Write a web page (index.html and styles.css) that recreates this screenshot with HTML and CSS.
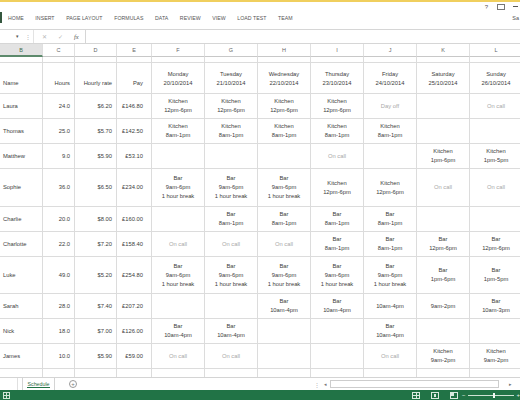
FILE: index.html
```html
<!DOCTYPE html>
<html>
<head>
<meta charset="utf-8">
<link rel="stylesheet" href="styles.css">
</head>
<body>
<div class="app">
  <div class="titlebar">
    <div class="winctl">
      <span class="help">?</span>
      <span class="restore"><span class="arrow"></span></span>
      <span class="min"></span>
    </div>
  </div>
  <div class="ribbon">
    <span class="file"></span>
    <nav class="tabs">
      <span>HOME</span><span>INSERT</span><span>PAGE LAYOUT</span><span>FORMULAS</span><span>DATA</span><span>REVIEW</span><span>VIEW</span><span>LOAD TEST</span><span>TEAM</span>
    </nav>
    <span class="user">Sa</span>
  </div>
  <div class="fbar">
    <div class="namebox"><span class="dd">▾</span></div>
    <span class="vdots">⋮</span>
    <div class="fbtns"><span class="x">✕</span><span class="ok">✓</span><span class="fx">fx</span></div>
    <div class="finput"></div>
  </div>
  <div class="sheet">
    <div class="ch sel">B</div><div class="ch">C</div><div class="ch">D</div><div class="ch">E</div><div class="ch">F</div><div class="ch">G</div><div class="ch">H</div><div class="ch">I</div><div class="ch">J</div><div class="ch">K</div><div class="ch">L</div>

    <div class="c"></div><div class="c"></div><div class="c"></div><div class="c"></div><div class="c"></div><div class="c"></div><div class="c"></div><div class="c"></div><div class="c"></div><div class="c"></div><div class="c"></div>

    <div class="c hd l">Name</div><div class="c hd r">Hours</div><div class="c hd r">Hourly rate</div><div class="c hd r pay">Pay</div>
    <div class="c hd">Monday<br>20/10/2014</div><div class="c hd">Tuesday<br>21/10/2014</div><div class="c hd">Wednesday<br>22/10/2014</div><div class="c hd">Thursday<br>23/10/2014</div><div class="c hd">Friday<br>24/10/2014</div><div class="c hd">Saturday<br>25/10/2014</div><div class="c hd">Sunday<br>26/10/2014</div>

    <div class="c l">Laura</div><div class="c r">24.0</div><div class="c r">$6.20</div><div class="c r pay">£146.80</div>
    <div class="c">Kitchen<br>12pm-6pm</div><div class="c">Kitchen<br>12pm-6pm</div><div class="c">Kitchen<br>12pm-6pm</div><div class="c">Kitchen<br>12pm-6pm</div><div class="c off">Day off</div><div class="c"></div><div class="c off">On call</div>

    <div class="c l">Thomas</div><div class="c r">25.0</div><div class="c r">$5.70</div><div class="c r pay">£142.50</div>
    <div class="c">Kitchen<br>8am-1pm</div><div class="c">Kitchen<br>8am-1pm</div><div class="c">Kitchen<br>8am-1pm</div><div class="c">Kitchen<br>8am-1pm</div><div class="c">Kitchen<br>8am-1pm</div><div class="c"></div><div class="c"></div>

    <div class="c l">Matthew</div><div class="c r">9.0</div><div class="c r">$5.90</div><div class="c r pay">£53.10</div>
    <div class="c"></div><div class="c"></div><div class="c"></div><div class="c off">On call</div><div class="c"></div><div class="c">Kitchen<br>1pm-6pm</div><div class="c">Kitchen<br>1pm-5pm</div>

    <div class="c l">Sophie</div><div class="c r">36.0</div><div class="c r">$6.50</div><div class="c r pay">£234.00</div>
    <div class="c">Bar<br>9am-6pm<br>1 hour break</div><div class="c">Bar<br>9am-6pm<br>1 hour break</div><div class="c">Bar<br>9am-6pm<br>1 hour break</div><div class="c">Kitchen<br>12pm-6pm</div><div class="c">Kitchen<br>12pm-6pm</div><div class="c off">On call</div><div class="c off">On call</div>

    <div class="c l">Charlie</div><div class="c r">20.0</div><div class="c r">$8.00</div><div class="c r pay">£160.00</div>
    <div class="c"></div><div class="c">Bar<br>8am-1pm</div><div class="c">Bar<br>8am-1pm</div><div class="c">Bar<br>8am-1pm</div><div class="c">Bar<br>8am-1pm</div><div class="c"></div><div class="c"></div>

    <div class="c l">Charlotte</div><div class="c r">22.0</div><div class="c r">$7.20</div><div class="c r pay">£158.40</div>
    <div class="c off">On call</div><div class="c off">On call</div><div class="c off">On call</div><div class="c">Bar<br>8am-1pm</div><div class="c">Bar<br>8am-1pm</div><div class="c">Bar<br>12pm-6pm</div><div class="c">Bar<br>12pm-6pm</div>

    <div class="c l">Luke</div><div class="c r">49.0</div><div class="c r">$5.20</div><div class="c r pay">£254.80</div>
    <div class="c">Bar<br>9am-6pm<br>1 hour break</div><div class="c">Bar<br>9am-6pm<br>1 hour break</div><div class="c">Bar<br>9am-6pm<br>1 hour break</div><div class="c">Bar<br>9am-6pm<br>1 hour break</div><div class="c">Bar<br>9am-6pm<br>1 hour break</div><div class="c">Bar<br>1pm-6pm</div><div class="c">Bar<br>1pm-5pm</div>

    <div class="c l">Sarah</div><div class="c r">28.0</div><div class="c r">$7.40</div><div class="c r pay">£207.20</div>
    <div class="c"></div><div class="c"></div><div class="c">Bar<br>10am-4pm</div><div class="c">Bar<br>10am-4pm</div><div class="c">10am-4pm</div><div class="c">9am-2pm</div><div class="c">Bar<br>10am-3pm</div>

    <div class="c l">Nick</div><div class="c r">18.0</div><div class="c r">$7.00</div><div class="c r pay">£126.00</div>
    <div class="c">Bar<br>10am-4pm</div><div class="c">Bar<br>10am-4pm</div><div class="c"></div><div class="c"></div><div class="c">Bar<br>10am-4pm</div><div class="c"></div><div class="c"></div>

    <div class="c l">James</div><div class="c r">10.0</div><div class="c r">$5.90</div><div class="c r pay">£59.00</div>
    <div class="c off">On call</div><div class="c off">On call</div><div class="c"></div><div class="c"></div><div class="c off">On call</div><div class="c">Kitchen<br>9am-2pm</div><div class="c">Kitchen<br>9am-2pm</div>

    <div class="c last"></div><div class="c last"></div><div class="c last"></div><div class="c last"></div><div class="c last"></div><div class="c last"></div><div class="c last"></div><div class="c last"></div><div class="c last"></div><div class="c last"></div><div class="c last"></div>
  </div>
  <div class="sheetbar">
    <div class="nav"></div>
    <div class="stab">Schedule</div>
    <div class="add">+</div>
    <div class="hs">
      <span class="hdots">⋮</span>
      <div class="track"><span class="larr">◂</span><div class="thumb"></div></div>
      <span class="rarr">▸</span>
    </div>
  </div>
  <div class="status">
    <span class="sicon"></span>
    <div class="views">
      <span class="v v1"></span><span class="v v2"></span><span class="v v3"></span>
      <div class="zoom"><span class="zm">−</span><div class="zline"><span class="zthumb"></span></div><span class="zp">+</span></div>
    </div>
  </div>
</div>
</body>
</html>
```

FILE: styles.css
```css
html, body {
  margin: 0;
  padding: 0;
  background: #ffffff;
}
body {
  width: 520px;
  height: 400px;
  overflow: hidden;
  font-family: "Liberation Sans", Arial, sans-serif;
  color: #404040;
}
.app {
  width: 520px;
  height: 400px;
  display: flex;
  flex-direction: column;
  overflow: hidden;
}

/* title bar */
.titlebar {
  height: 10px;
  border-top: 2px solid #f0cf5e;
  display: flex;
  justify-content: flex-end;
}
.winctl {
  display: flex;
  align-items: center;
  height: 9px;
}
.help {
  font-size: 6px;
  color: #555;
  line-height: 6px;
  margin-right: 9px;
}
.restore {
  width: 6px;
  height: 4px;
  border: 1px solid #777;
  margin-right: 8px;
  position: relative;
}
.min {
  width: 5px;
  height: 1px;
  background: #555;
  margin-right: 2px;
}

/* ribbon tabs */
.ribbon {
  height: 15px;
  display: flex;
  align-items: flex-start;
  position: relative;
}
.file {
  width: 2px;
  height: 11px;
  background: #35573f;
  margin-top: 0;
}
.tabs {
  display: flex;
  gap: 11.6px;
  padding-left: 6px;
  padding-top: 3px;
  font-size: 5.2px;
  line-height: 6px;
  color: #555;
  letter-spacing: 0.05px;
}
.user {
  margin-left: auto;
  margin-right: 1px;
  padding-top: 3px;
  font-size: 5.5px;
  line-height: 6px;
  color: #555;
  white-space: nowrap;
}

/* formula bar */
.fbar {
  margin-top: 2px;
  height: 13px;
  border-top: 1px solid #d6d6d6;
  border-bottom: 1px solid #d6d6d6;
  display: flex;
  align-items: center;
  box-sizing: content-box;
}
.namebox {
  width: 22px;
  height: 100%;
  display: flex;
  align-items: center;
  justify-content: flex-end;
}
.dd {
  font-size: 5px;
  color: #555;
  line-height: 5px;
  margin-right: 3px;
}
.vdots {
  font-size: 6px;
  color: #b0b0b0;
  line-height: 6px;
  margin-left: 3px;
  width: 8px;
}
.fbtns {
  display: flex;
  align-items: center;
  height: 100%;
  width: 52px;
  border-left: 1px solid #e3e3e3;
  box-sizing: border-box;
  padding-left: 8px;
  gap: 11px;
  font-size: 5.5px;
  line-height: 6px;
}
.fbtns .x, .fbtns .ok {
  color: #b8b8b8;
}
.fbtns .fx {
  color: #555;
  font-style: italic;
  font-family: "Liberation Serif", serif;
  font-size: 6.5px;
}
.finput {
  flex: 1;
  height: 100%;
  border-left: 1px solid #d6d6d6;
}

/* sheet grid */
.sheet {
  display: grid;
  grid-template-columns: 43px 32px 42px 35px repeat(7, 53px);
  grid-template-rows: 13px 6px 31px 25px 25px 25px 38px 25px 25px 37px 25px 25px 25px 8px;
  width: 523px;
}
.ch {
  box-sizing: border-box;
  border-right: 1px solid #e0e0e0;
  border-bottom: 1px solid #c8c8c8;
  display: flex;
  align-items: center;
  justify-content: center;
  font-size: 5.5px;
  color: #666;
}
.ch.sel {
  background: #e3e3e3;
  border-bottom: 2px solid #5d8a6c;
  color: #3f6d50;
}
.c {
  box-sizing: border-box;
  border-right: 1px solid #dcdcdc;
  border-bottom: 1px solid #dcdcdc;
  display: flex;
  align-items: center;
  justify-content: center;
  text-align: center;
  font-size: 5.8px;
  line-height: 9px;
  color: #404040;
  white-space: nowrap;
  overflow: hidden;
}
.c.l {
  justify-content: flex-start;
  text-align: left;
  padding-left: 3px;
}
.c.r {
  justify-content: flex-end;
  text-align: right;
  padding-right: 4px;
}
.c.pay {
  padding-right: 8px;
}
.c.hd {
  align-items: flex-end;
  padding-bottom: 5px;
}
.c.off {
  color: #a8a8a8;
}
.c.last {
  border-bottom: none;
}

/* sheet tabs bar */
.sheetbar {
  height: 12px;
  border-top: 1px solid #d4d4d4;
  display: flex;
  align-items: stretch;
  background: #ffffff;
}
.nav {
  width: 17px;
  border-right: 1px solid #e0e0e0;
}
.stab {
  margin-left: 4px;
  width: 33px;
  box-sizing: border-box;
  border-left: 1px solid #d4d4d4;
  border-right: 1px solid #d4d4d4;
  font-size: 5.3px;
  color: #2f6b45;
  display: flex;
  align-items: center;
  justify-content: center;
  position: relative;
}
.stab::after {
  content: "";
  position: absolute;
  left: 4px;
  right: 4px;
  bottom: 2px;
  height: 1px;
  background: #217346;
}
.add {
  margin-left: 14px;
  align-self: center;
  width: 6px;
  height: 6px;
  border: 1px solid #9a9a9a;
  border-radius: 50%;
  font-size: 6px;
  line-height: 6px;
  text-align: center;
  color: #777;
}
.hs {
  margin-left: auto;
  width: 206px;
  display: flex;
  align-items: center;
}
.hdots {
  font-size: 6px;
  color: #b0b0b0;
  width: 10px;
}
.track {
  width: 175px;
  height: 7px;
  display: flex;
  align-items: center;
}
.larr {
  font-size: 5px;
  color: #777;
  width: 6px;
}
.thumb {
  flex: 1;
  height: 6px;
  border: 1px solid #cdcdcd;
  background: #fff;
}
.rarr {
  font-size: 5px;
  color: #777;
  margin-left: 10px;
}

/* status bar */
.status {
  height: 10px;
  background: #217346;
  display: flex;
  align-items: center;
}
.sicon {
  width: 5px;
  height: 5px;
  margin-left: 3px;
  border: 1px solid #cfe6d6;
  background: linear-gradient(#cfe6d6, #cfe6d6) center / 1px 100% no-repeat, linear-gradient(#cfe6d6, #cfe6d6) center / 100% 1px no-repeat;
}
.views {
  margin-left: auto;
  display: flex;
  align-items: center;
  height: 100%;
}
.v {
  width: 6px;
  height: 5px;
  border: 1px solid #d9eade;
  margin-right: 11px;
}
.v1 {
  background: linear-gradient(#d9eade, #d9eade) center / 1px 100% no-repeat, linear-gradient(#d9eade, #d9eade) center / 100% 1px no-repeat;
}
.v2 {
  background: linear-gradient(#d9eade, #d9eade) center / 2px 3px no-repeat;
}
.v3 {
  background: linear-gradient(#d9eade, #d9eade) left top / 3px 3px no-repeat;
  margin-right: 4px;
}
.zoom {
  display: flex;
  align-items: center;
  width: 58px;
}
.zm, .zp {
  font-size: 6px;
  color: #e6f1e9;
  line-height: 6px;
}
.zline {
  flex: 1;
  height: 1px;
  background: #cfe3d5;
  margin: 0 2px;
  position: relative;
}
.zthumb {
  position: absolute;
  left: 25px;
  top: -2px;
  width: 2px;
  height: 5px;
  background: #f2f7f3;
}
```
